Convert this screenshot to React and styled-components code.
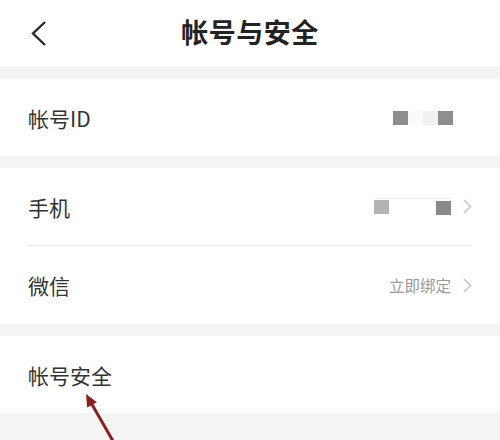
import React from "react";
import styled, { createGlobalStyle } from "styled-components";

const GlobalStyle = createGlobalStyle`
  html, body {
    margin: 0;
    padding: 0;
    background: #f4f4f4;
  }
  body {
    font-family: "Noto Sans CJK SC", "Noto Sans", sans-serif;
    color: #333;
  }
`;

const Page = styled.div`
  position: relative;
  width: 500px;
  height: 440px;
  overflow: hidden;
  background: #f4f4f4;
`;

const Header = styled.div`
  height: 67px;
  background: #fff;
  display: grid;
  grid-template-columns: 1fr auto 1fr;
  align-items: center;
`;

const Back = styled.button`
  justify-self: start;
  margin-left: 30px;
  margin-top: 0;
  padding: 0;
  border: 0;
  background: none;
  display: flex;
`;

const Title = styled.h1`
  margin: 0 0 5px;
  font-size: 27px;
  font-weight: 700;
  color: #222;
  letter-spacing: 0.5px;
`;

const Section = styled.div`
  margin-top: 12px;
  background: #fff;
`;

const Row = styled.div`
  height: ${(p) => p.h || 77}px;
  margin: 0 28px;
  display: flex;
  align-items: center;
  justify-content: space-between;
  border-top: ${(p) => (p.divider ? "1px solid #efefef" : "0")};
`;

const Label = styled.span`
  font-size: 21px;
  color: #333;
`;

const Value = styled.div`
  display: flex;
  align-items: center;
  gap: 12px;
  margin-right: ${(p) => p.mr || 0}px;
`;

const Hint = styled.span`
  font-size: 15.5px;
  color: #9a9a9a;
`;

const Mask = styled.div`
  display: flex;
  align-items: center;
  gap: ${(p) => p.gap || 0}px;
  border-top: ${(p) => (p.line ? "1px solid #f0f0f0" : "0")};
`;

const Pixel = styled.span`
  width: 15px;
  height: 14px;
  background: ${(p) => p.c};
  margin-top: ${(p) => p.dy || 0}px;
`;

const Overlay = styled.svg`
  position: absolute;
  left: 0;
  top: 0;
  pointer-events: none;
`;

const Chevron = () => (
  <svg width="9" height="15" viewBox="0 0 9 15">
    <path d="M1 1l6.5 6.5L1 14" fill="none" stroke="#c4c4c4" strokeWidth="1.5" />
  </svg>
);

export default function App() {
  return (
    <Page>
      <GlobalStyle />
      <Header>
        <Back aria-label="返回">
          <svg width="20" height="28" viewBox="0 0 20 28">
            <path d="M15 2L3 13.5 15 25" fill="none" stroke="#2a2a2a" strokeWidth="2.4" />
          </svg>
        </Back>
        <Title>帐号与安全</Title>
        <div />
      </Header>

      <Section>
        <Row>
          <Label>帐号ID</Label>
          <Value mr={19}>
            <Mask>
              <Pixel c="#8e8e8e" />
              <Pixel c="#fafafa" />
              <Pixel c="#f1f1f1" />
              <Pixel c="#8e8e8e" />
            </Mask>
          </Value>
        </Row>
      </Section>

      <Section>
        <Row>
          <Label>手机</Label>
          <Value>
            <Mask line>
              <Pixel c="#b3b3b3" />
              <span style={{ width: 47 }} />
              <Pixel c="#8a8a8a" dy={2} />
            </Mask>
            <Chevron />
          </Value>
        </Row>
        <Row divider h={78}>
          <Label>微信</Label>
          <Value>
            <Hint>立即绑定</Hint>
            <Chevron />
          </Value>
        </Row>
      </Section>

      <Section>
        <Row>
          <Label>帐号安全</Label>
        </Row>
      </Section>

      <Overlay width="500" height="440" viewBox="0 0 500 440">
        <line x1="117" y1="448" x2="90" y2="401" stroke="#8b1e1e" strokeWidth="3" />
        <polygon points="86,394 96.8,402.2 87.2,407.6" fill="#8b1e1e" />
      </Overlay>
    </Page>
  );
}
